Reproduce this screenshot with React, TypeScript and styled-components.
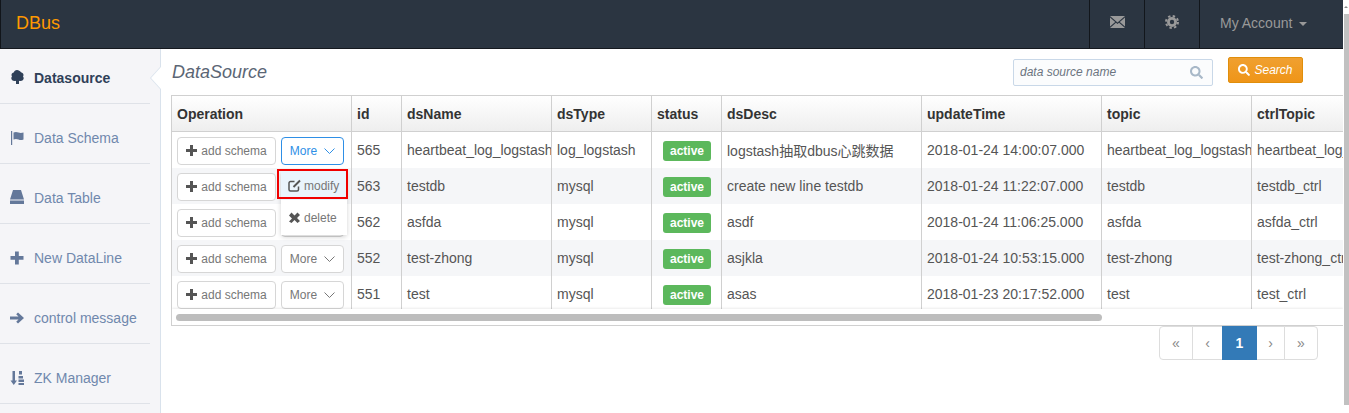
import React from 'react';
import styled, { createGlobalStyle } from 'styled-components';
import { FaSearch } from 'react-icons/fa';

const GlobalStyle = createGlobalStyle`
  html, body {
    margin: 0;
    padding: 0;
    height: 413px;
    overflow: hidden;
    background: #fff;
    font-family: "Liberation Sans", Arial, "Noto Sans CJK SC", sans-serif;
  }
  * { box-sizing: border-box; }
`;

const Page = styled.div`
  width: 1349px;
  height: 413px;
  overflow: hidden;
  display: flex;
  flex-direction: column;
  position: relative;
`;

const Header = styled.header`
  height: 49px;
  margin-right: 6px;
  background: #2b3541;
  border-left: 1px solid #11151a;
  border-bottom: 1px solid #15191f;
  display: flex;
  align-items: stretch;
  flex: none;
`;

const Brand = styled.div`
  flex: 1;
  padding-left: 15px;
  line-height: 47px;
  font-size: 18px;
  color: #f90;
`;

const HeadCell = styled.div<{ $w: number }>`
  width: ${(p) => p.$w}px;
  border-left: 1px solid #12161b;
  display: flex;
  align-items: center;
  justify-content: center;
  padding-bottom: 4px;
  color: #999;
  font-size: 14px;
`;

const AccountCell = styled(HeadCell)`
  justify-content: flex-start;
  padding: 0 0 2px 20px;
  gap: 7px;
`;

const Caret = styled.span`
  width: 0;
  height: 0;
  margin-top: 2px;
  border-top: 4px solid #999;
  border-left: 4px solid transparent;
  border-right: 4px solid transparent;
`;

const Body = styled.div`
  flex: 1;
  display: flex;
  min-height: 0;
`;

const Sidebar = styled.nav`
  width: 161px;
  flex: none;
  background: #f5f5f8;
  border-right: 1px solid #d9e2ec;
  padding-right: 10px;
  position: relative;
`;

const NavItem = styled.div<{ $active?: boolean }>`
  height: ${(p) => (p.$active ? '55px' : '60px')};
  border-bottom: 1px solid #dfe2e8;
  padding: ${(p) => (p.$active ? '4px 0 0 10px' : '8px 0 0 10px')};
  display: flex;
  align-items: center;
  gap: 10px;
  font-size: 14px;
  font-weight: ${(p) => (p.$active ? 700 : 400)};
  color: ${(p) => (p.$active ? '#2f4058' : '#7088ad')};
`;

const NavIcon = styled.svg<{ $active?: boolean }>`
  width: 14px;
  height: 14px;
  flex: none;
  overflow: visible;
  fill: ${(p) => (p.$active ? '#2f4058' : '#64789a')};
`;

const Notch = styled.div`
  position: absolute;
  top: 18px;
  right: -1px;
  width: 0;
  height: 0;
  border-top: 11px solid transparent;
  border-bottom: 11px solid transparent;
  border-right: 10px solid #fff;
  filter: drop-shadow(-1px 0 0 #d9e2ec);
`;

const Main = styled.main`
  flex: 1;
  min-width: 0;
  padding: 0 0 0 10px;
  position: relative;
`;

const TopBar = styled.div`
  height: 46px;
  margin-right: 46px;
  display: flex;
  align-items: center;
`;

const Title = styled.h1`
  margin: 0 auto 0 1px;
  font-size: 18px;
  font-weight: 400;
  font-style: italic;
  color: #5b6675;
`;

const SearchBox = styled.div`
  width: 200px;
  height: 27px;
  border: 1px solid #c9d8e8;
  border-radius: 2px;
  background: #fbfcfd;
  display: flex;
  align-items: center;
  justify-content: space-between;
  padding: 0 9px 0 6px;
  font-size: 12px;
  font-style: italic;
  color: #6b7480;
  margin-right: 15px;
  svg { color: #a8b8c8; font-size: 13px; }
`;

const SearchButton = styled.button`
  width: 75px;
  height: 26px;
  margin-top: -4px;
  border: 1px solid #e08e0b;
  border-radius: 2px;
  background: linear-gradient(#f0a030, #ef9518);
  color: #fff;
  font: italic 12px "Liberation Sans", sans-serif;
  display: flex;
  align-items: center;
  justify-content: center;
  gap: 4px;
  padding: 0;
`;

const TableFrame = styled.div`
  width: 1172px;
  height: 231px;
  border: 1px solid #d0d0d0;
  border-right: none;
  overflow: hidden;
  position: relative;
`;

const Table = styled.table`
  border-collapse: separate;
  border-spacing: 0;
  table-layout: fixed;
  width: 1299px;
  font-size: 14px;
  color: #555;
`;

const Th = styled.th`
  height: 36px;
  padding: 0 5px;
  text-align: left;
  font-size: 14px;
  font-weight: 700;
  color: #333;
  border-bottom: 1px solid #d0d0d0;
  border-left: 1px solid #d0d0d0;
  background: linear-gradient(#fff, #eee);
  &:first-child { border-left: none; }
`;

const Tr = styled.tr<{ $odd: boolean }>`
  background: ${(p) => (p.$odd ? '#f5f6f8' : '#fff')};
`;

const Td = styled.td`
  height: 36px;
  padding: 0 5px;
  white-space: nowrap;
  overflow: hidden;
  border-left: 1px solid #d0d0d0;
  &:first-child { border-left: none; }
`;

const BadgeCell = styled(Td)`
  padding-left: 11px;
`;

const Badge = styled.span`
  display: inline-block;
  height: 20px;
  width: 48px;
  line-height: 20px;
  border-radius: 3px;
  background: #5cb85c;
  color: #fff;
  text-align: center;
  font-size: 12px;
  font-weight: 700;
  position: relative;
  top: 1px;
`;

const Ops = styled.div`
  display: flex;
  gap: 5px;
  align-items: center;
  margin-top: 1px;
`;

const OpButton = styled.button<{ $w: number; $active?: boolean }>`
  width: ${(p) => p.$w}px;
  height: 28px;
  border: 1px solid ${(p) => (p.$active ? '#2e8fe6' : '#d6d6d6')};
  border-radius: 4px;
  background: #fff;
  color: ${(p) => (p.$active ? '#2e8fe6' : '#777')};
  font: 12px "Liberation Sans", sans-serif;
  display: flex;
  align-items: center;
  justify-content: center;
  gap: 4px;
  padding: 0;
`;

const PlusIcon = styled.svg`
  width: 11px;
  height: 11px;
  fill: #555;
`;

const Chevron = styled.svg`
  width: 11px;
  height: 6px;
  margin-left: 3px;
  fill: none;
  stroke: currentColor;
  stroke-width: 1;
`;

const Menu = styled.div`
  position: absolute;
  left: 109px;
  top: 75px;
  width: 66px;
  height: 64px;
  background: #fff;
  border-radius: 0 0 4px 4px;
  box-shadow: 0 2px 5px rgba(0, 0, 0, 0.18);
  z-index: 2;
`;

const MenuItem = styled.div<{ $hover?: boolean }>`
  height: ${(p) => (p.$hover ? '29px' : '35px')};
  background: ${(p) => (p.$hover ? '#eaf4fc' : '#fff')};
  color: #777;
  font-size: 12px;
  display: flex;
  align-items: center;
  padding-left: 7px;
  gap: 3px;
`;

const MenuIcon = styled.svg`
  width: 13px;
  height: 13px;
  flex: none;
`;

const RedBox = styled.div`
  position: absolute;
  left: 105px;
  top: 73px;
  width: 71px;
  height: 30px;
  border: 2px solid #f00000;
  z-index: 3;
`;

const ScrollTrack = styled.div`
  position: absolute;
  left: 0;
  right: 0;
  bottom: 0;
  height: 16px;
  background: #fff;
  box-shadow: 0 -1px 2px rgba(0, 0, 0, 0.08);
  z-index: 1;
`;

const ScrollThumb = styled.div`
  position: absolute;
  left: 4px;
  top: 5px;
  width: 926px;
  height: 7px;
  border-radius: 4px;
  background: #bdbdbd;
`;

const Pager = styled.div`
  display: flex;
  justify-content: flex-end;
  width: 1147px;
`;

const PageLink = styled.div<{ $w: number; $current?: boolean }>`
  width: ${(p) => p.$w}px;
  height: 34px;
  display: flex;
  align-items: center;
  justify-content: center;
  font-size: 14px;
  border: 1px solid ${(p) => (p.$current ? '#337ab7' : '#ddd')};
  margin-left: -1px;
  background: ${(p) => (p.$current ? '#337ab7' : '#fff')};
  color: ${(p) => (p.$current ? '#fff' : '#888')};
  font-weight: ${(p) => (p.$current ? 700 : 400)};
  position: relative;
  z-index: ${(p) => (p.$current ? 1 : 0)};
  &:first-child { border-radius: 4px 0 0 4px; }
  &:last-child { border-radius: 0 4px 4px 0; }
`;

const PageArrow = styled.div`
  position: absolute;
  right: 1px;
  top: 6px;
  width: 0;
  height: 0;
  border-left: 2px solid transparent;
  border-right: 2px solid transparent;
  border-bottom: 2px solid #8a8a8a;
`;

const PageThumb = styled.div`
  position: absolute;
  right: 0;
  top: 14px;
  height: 391px;
  width: 5px;
  background: #c1c1c1;
`;

const navItems = [
  { label: 'Datasource', active: true, path: 'M7-1C5.300-1 4.200 0 4 1.200 2.500 1.500 1.500 2.700 1.500 4c0 .6.200 1.100.5 1.500-.4.500-.7 1.100-.7 1.700 0 1.500 1.400 2.800 3.200 2.800.5 0 1-.1 1.500-.3V13h3V9.700c.5.200 1 .3 1.500.3 1.800 0 3.200-1.300 3.200-2.800 0-.6-.3-1.200-.7-1.700.3-.4.500-.9.500-1.500 0-1.300-1-2.500-2.500-2.800C9.800 0 8.700-1 7-1z' },
  { label: 'Data Schema', path: 'M1 0h1.200v14H1zM3.500 1.500c2-1 3.500-.6 5 0s2.800.7 5 0v7c-2.200.8-3.500.6-5 0s-3-1-5 0z' },
  { label: 'Data Table', path: 'M3-1h8l3 9.500H0zM0 9.500h14V13H0z' },
  { label: 'New DataLine', path: 'M5 .5h3.800V5h4.700v3.800H8.800v4.700H5V8.800H.5V5H5z' },
  { label: 'control message', path: 'M8 1.500l6 5.500-6 5.500-1.800-1.800 2.300-2.300H0V5.600h8.500L6.200 3.300z' },
  { label: 'ZK Manager', path: 'M2.500 0H5v9.500h2L3.750 14 .5 9.500h2zM9 0h3v3.500H9zM8.500 5H13v2.500H8.500zM8.500 8.500H14V11H8.500zM8.500 12H14v2H8.500z' },
];

const rows = [
  ['565', 'heartbeat_log_logstash', 'log_logstash', 'logstash抽取dbus心跳数据', '2018-01-24 14:00:07.000', 'heartbeat_log_logstash', 'heartbeat_log_logstash_ctrl'],
  ['563', 'testdb', 'mysql', 'create new line testdb', '2018-01-24 11:22:07.000', 'testdb', 'testdb_ctrl'],
  ['562', 'asfda', 'mysql', 'asdf', '2018-01-24 11:06:25.000', 'asfda', 'asfda_ctrl'],
  ['552', 'test-zhong', 'mysql', 'asjkla', '2018-01-24 10:53:15.000', 'test-zhong', 'test-zhong_ctrl'],
  ['551', 'test', 'mysql', 'asas', '2018-01-23 20:17:52.000', 'test', 'test_ctrl'],
];

const columns: [string, number][] = [
  ['Operation', 179], ['id', 50], ['dsName', 150], ['dsType', 100], ['status', 70],
  ['dsDesc', 200], ['updateTime', 180], ['topic', 150], ['ctrlTopic', 220],
];

export default function App() {
  return (
    <Page>
      <GlobalStyle />
      <Header>
        <Brand>DBus</Brand>
        <HeadCell $w={55}>
          <svg width="15" height="12" viewBox="0 0 15 12" fill="#999">
            <path d="M0 0h15L7.500 6.500zM0 1.500v9l5.200-4.500zM15 1.500v9L9.800 6zM0 12l6-5.200 1.500 1.300L9 6.800 15 12z" />
          </svg>
        </HeadCell>
        <HeadCell $w={55}>
          <svg width="14" height="14" viewBox="0 0 14 14" fill="none" stroke="#999">
            <circle cx="7" cy="7" r="3.600" strokeWidth="2.800" />
            <circle cx="7" cy="7" r="6" strokeWidth="2" strokeDasharray="2.400 2.312" />
          </svg>
        </HeadCell>
        <AccountCell $w={144}>My Account<Caret /></AccountCell>
      </Header>
      <Body>
        <Sidebar>
          {navItems.map((n) => (
            <NavItem key={n.label} $active={n.active}>
              <NavIcon $active={n.active} viewBox="0 0 14 14"><path d={n.path} /></NavIcon>
              {n.label}
            </NavItem>
          ))}
          <Notch />
        </Sidebar>
        <Main>
          <TopBar>
            <Title>DataSource</Title>
            <SearchBox>data source name<FaSearch /></SearchBox>
            <SearchButton><FaSearch size={12} />Search</SearchButton>
          </TopBar>
          <TableFrame>
            <Table>
              <colgroup>
                {columns.map(([name, w]) => <col key={name} width={w} />)}
              </colgroup>
              <thead>
                <tr>{columns.map(([name]) => <Th key={name}>{name}</Th>)}</tr>
              </thead>
              <tbody>
                {rows.map((r, i) => (
                  <Tr key={r[0]} $odd={i % 2 === 1}>
                    <Td>
                      <Ops>
                        <OpButton $w={99}>
                          <PlusIcon viewBox="0 0 11 11"><path d="M4 0h3v4h4v3H7v4H4V7H0V4h4z" /></PlusIcon>
                          add schema
                        </OpButton>
                        <OpButton $w={63} $active={i === 0}>
                          More
                          <Chevron viewBox="0 0 11 6"><path d="M.5.5l5 5 5-5" /></Chevron>
                        </OpButton>
                      </Ops>
                    </Td>
                    <Td>{r[0]}</Td>
                    <Td>{r[1]}</Td>
                    <Td>{r[2]}</Td>
                    <BadgeCell><Badge>active</Badge></BadgeCell>
                    <Td>{r[3]}</Td>
                    <Td>{r[4]}</Td>
                    <Td>{r[5]}</Td>
                    <Td>{r[6]}</Td>
                  </Tr>
                ))}
              </tbody>
            </Table>
            <Menu>
              <MenuItem $hover>
                <MenuIcon viewBox="0 0 13 13" fill="none" stroke="#555" strokeWidth="1.500">
                  <path d="M10.500 7.500v3a1.500 1.500 0 0 1-1.500 1.500H2.500A1.500 1.500 0 0 1 1 10.500V4a1.500 1.500 0 0 1 1.500-1.500h4" />
                  <path d="M5.500 8l6.500-6.500" strokeWidth="2" />
                </MenuIcon>
                modify
              </MenuItem>
              <MenuItem>
                <MenuIcon viewBox="0 0 13 13" fill="#555">
                  <path d="M3.500 1.500l3 3 3-3 2.500 2.500-3 3 3 3-2.500 2-3-3-3 3L1 10.500l3-3-3-3z" />
                </MenuIcon>
                delete
              </MenuItem>
            </Menu>
            <RedBox />
            <ScrollTrack><ScrollThumb /></ScrollTrack>
          </TableFrame>
          <Pager>
            <PageLink $w={34}>«</PageLink>
            <PageLink $w={31}>‹</PageLink>
            <PageLink $w={35} $current>1</PageLink>
            <PageLink $w={29}>›</PageLink>
            <PageLink $w={34}>»</PageLink>
          </Pager>
        </Main>
      </Body>
      <PageArrow />
      <PageThumb />
    </Page>
  );
}
